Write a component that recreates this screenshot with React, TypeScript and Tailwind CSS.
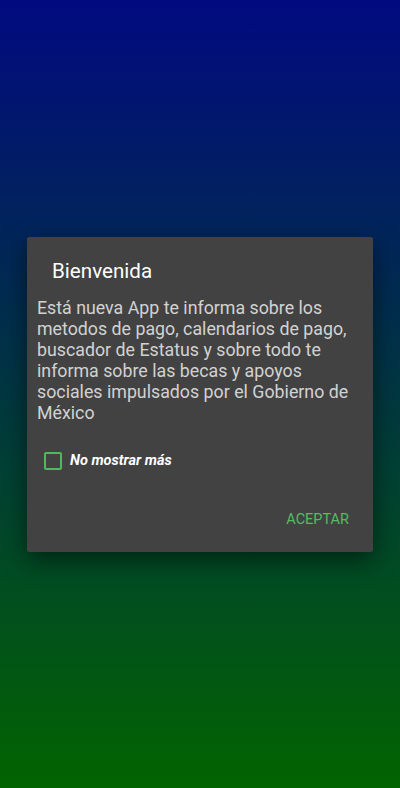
import { useState } from "react";

const App = () => {
  const [checked, setChecked] = useState(false);

  return (
    <div
      className="min-h-[788px] w-full flex items-start justify-center bg-linear-to-b/srgb from-[#010a80] to-[#026400]"
      style={{ fontFamily: "Roboto, 'Noto Sans', sans-serif" }}
    >
      {/* Dialog */}
      <div className="mt-[237px] w-[346px] h-[315px] bg-[#424242] rounded-[2px] shadow-[0_8px_24px_rgba(0,0,0,0.5)] flex flex-col">
        <h2 className="pl-[25px] pt-[21px] text-[20.6px] leading-[26px] text-white">Bienvenida</h2>

        <p className="px-[10px] mt-[13px] text-[17.8px] leading-[21px] text-[#d2d2d2]">
          Está nueva App te informa sobre los metodos de pago, calendarios de pago, buscador de Estatus y sobre todo te informa sobre las becas y apoyos sociales impulsados por el Gobierno de México
        </p>

        <label className="mt-[27px] ml-[17px] flex items-center gap-[8px] cursor-pointer">
          <span
            onClick={() => setChecked(!checked)}
            className="w-[18px] h-[18px] rounded-[2px] border-2 border-[#4cbb5c] flex items-center justify-center"
          >
            {checked && (
              <svg viewBox="0 0 24 24" className="w-[14px] h-[14px] text-[#4cbb5c]" fill="none" stroke="currentColor" strokeWidth="3">
                <path d="M5 12l5 5L20 7" />
              </svg>
            )}
          </span>
          <span className="text-[14.5px] font-bold italic text-white">No mostrar más</span>
        </label>

        <div className="mt-auto mb-[21px] flex justify-end pr-[24px]">
          <button className="text-[14.5px] font-normal text-[#52bd62]">ACEPTAR</button>
        </div>
      </div>
    </div>
  );
};

export default App;
